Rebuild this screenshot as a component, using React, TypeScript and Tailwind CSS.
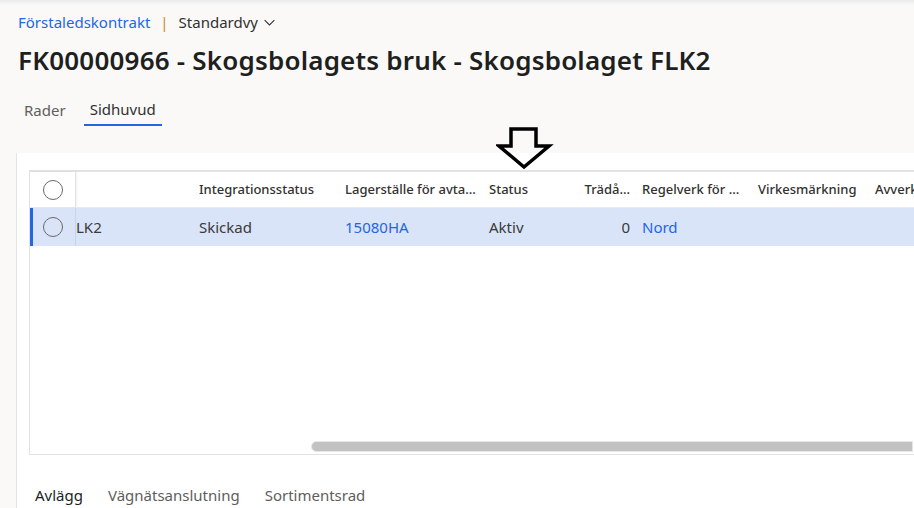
import React from "react";

const headers = [
  { label: "", w: "w-[123px]" },
  { label: "Integrationsstatus", w: "w-[146px]" },
  { label: "Lagerställe för avta...", w: "w-[144px]" },
  { label: "Status", w: "w-[86px]" },
  { label: "Trädå...", w: "w-[67px]", right: true },
  { label: "Regelverk för ...", w: "w-[116px]" },
  { label: "Virkesmärkning", w: "w-[117px]" },
  { label: "Avverkningsform", w: "w-[140px]" },
];

const row = [
  { text: "LK2" },
  { text: "Skickad" },
  { text: "15080HA", link: true },
  { text: "Aktiv" },
  { text: "0", right: true },
  { text: "Nord", link: true },
  { text: "" },
  { text: "" },
];

const Circle = () => (
  <div className="h-[20px] w-[20px] rounded-full border border-[#6b6967]" />
);

const App: React.FC = () => {
  return (
    <div className="relative h-[508px] w-[914px] overflow-hidden bg-[#faf9f8] font-['Noto_Sans',sans-serif] text-[#323130]">
      {/* top shadow */}
      <div className="h-[5px] bg-gradient-to-b from-[#ebebeb] to-[#faf9f8]" />

      {/* Header */}
      <div className="px-[18px]">
        <div className="mt-[6px] flex h-[22px] items-center text-[15px]">
          <span className="text-[#2266e3]">Förstaledskontrakt</span>
          <span className="mx-[10px] text-[#c98a2b]">|</span>
          <span>Standardvy</span>
          <svg className="ml-[5px]" width="13" height="13" viewBox="0 0 16 16">
            <path d="M2 5l6 6 6-6" fill="none" stroke="#323130" strokeWidth="1.3" />
          </svg>
        </div>
        <h1 className="mt-[11px] whitespace-nowrap text-[26px] leading-[32px] font-semibold tracking-[0.2px] text-[#201f1e]">
          FK00000966 - Skogsbolagets bruk - Skogsbolaget FLK2
        </h1>
        <div className="mt-[18px] flex gap-[12px] text-[15px]">
          <div className="flex h-[32px] items-center px-[6px] text-[#605e5c]">Rader</div>
          <div className="flex h-[32px] items-center border-b-2 border-[#2266e3] px-[6px]">
            Sidhuvud
          </div>
        </div>
      </div>

      {/* Panel */}
      <div className="ml-[16px] mt-[27px] h-[400px] border-l border-[#e6e4e2] bg-white pl-[12px] pt-[17px]">
        <div className="flex h-[285px] w-[1000px] flex-col border-l border-b border-t-2 border-[#e3e2e1]">
          {/* header row */}
          <div className="flex h-[36px] border-b border-[#ebebeb] text-[13px] font-medium">
            <div className="flex w-[46px] items-center justify-center border-r border-[#e3e3e3] shadow-[1px_0_2px_rgba(0,0,0,0.06)]">
              <Circle />
            </div>
            {headers.map((h, i) => (
              <div
                key={i}
                className={`${h.w} flex items-center whitespace-nowrap ${h.right ? "justify-end pr-[12px]" : ""}`}
              >
                {h.label}
              </div>
            ))}
          </div>
          {/* data row */}
          <div className="flex h-[38px] bg-[#d9e4f8] text-[15px]">
            <div className="flex w-[46px] items-center justify-center border-r border-[#c9d3e6] border-l-[3px] border-l-[#2266e3] pr-[3px]">
              <Circle />
            </div>
            {row.map((c, i) => (
              <div
                key={i}
                className={`${headers[i].w} flex items-center whitespace-nowrap ${c.right ? "justify-end pr-[12px]" : ""} ${c.link ? "text-[#2266e3]" : "text-[#3b3a39]"}`}
              >
                {c.text}
              </div>
            ))}
          </div>
          <div className="flex-1" />
          {/* horizontal scrollbar */}
          <div className="mb-[2px] flex">
            <div className="w-[281px]" />
            <div className="h-[11px] w-[602px] rounded-l-full border border-[#e6e6e6] bg-[#c2c2c2]" />
          </div>
        </div>

        {/* bottom tabs */}
        <div className="mt-[29px] flex gap-[25px] pl-[6px] text-[15px] text-[#605e5c]">
          <span className="text-[#201f1e]">Avlägg</span>
          <span>Vägnätsanslutning</span>
          <span>Sortimentsrad</span>
        </div>
      </div>

      {/* Arrow annotation */}
      <svg
        className="absolute left-[496px] top-[125px]"
        width="58"
        height="46"
        viewBox="496 125 58 46"
      >
        <path
          d="M511 129 H536 V146 H549 L524 167 L499 146 H511 Z"
          fill="none"
          stroke="#000"
          strokeWidth="3.5"
          strokeLinejoin="miter"
        />
      </svg>
    </div>
  );
};

export default App;
